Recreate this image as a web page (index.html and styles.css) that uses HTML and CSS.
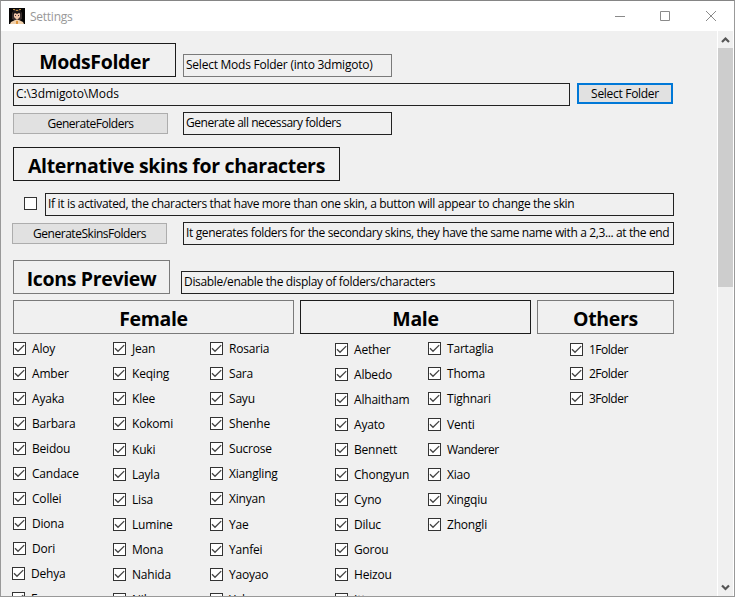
FILE: index.html
```
<!DOCTYPE html>
<html lang="en">
<head>
<meta charset="utf-8">
<title>Settings</title>
<link rel="stylesheet" href="styles.css">
</head>
<body>
<svg width="0" height="0" class="defs"><defs>
<symbol id="c" viewBox="0 0 13 13"><rect x=".5" y=".5" width="12" height="12" fill="#fff" stroke="#333"/><path d="M2 6.300 5 9.300 11.200 3.100" fill="none" stroke="#444" stroke-width="1.300"/></symbol>
</defs></svg>
<div class="window">
<header class="titlebar">
<svg class="avatar" width="16" height="16" viewBox="0 0 16 16"><rect width="16" height="16" fill="#060505"/><path d="M3 5 5 2 8 1l3 1 2 3v6l-2 1H5l-2-1z" fill="#3a302f"/><path d="M5 5h6v4l-3 3-3-3z" fill="#edc3a6"/><path d="M4 1h2v1H4zM10 1h2v1h-2zM7 2h2v1H7z" fill="#b98a3c"/><path d="M4 3h8v3l-2-1-2 1-2-1-2 2z" fill="#1c1717"/><path d="M6 7h1v1H6zM9 7h1v1H9z" fill="#42303a"/><path d="M1 16l1-2 4-2h4l4 2 1 2z" fill="#f0d0ab"/><path d="M7 13h2v3H7z" fill="#e0963d"/></svg>
<span class="caption">Settings</span>
<svg class="controls" width="104" height="12" viewBox="0 0 104 12" fill="none" stroke="#8a8a8a"><path d="M0 6.500h10M45.500 1.500h9v9h-9zM91 1l10 10M101 1 91 11"/></svg>
</header>
<div class="client">
<main class="content">
<div class="row r1"><h1 class="title mods">ModsFolder</h1><div class="box soft short">Select Mods Folder (into 3dmigoto)</div></div>
<div class="row r2"><div class="box path">C:\3dmigoto\Mods</div><button class="btn focus">Select Folder</button></div>
<div class="row r3"><button class="btn">GenerateFolders</button><div class="box short all">Generate all necessary folders</div></div>
<div class="row r4"><h1 class="title alt">Alternative skins for characters</h1></div>
<div class="row r5"><span class="empty"></span><div class="box grow">If it is activated, the characters that have more than one skin, a button will appear to change the skin</div></div>
<div class="row r6"><button class="btn">GenerateSkinsFolders</button><div class="box grow long">It generates folders for the secondary skins, they have the same name with a 2,3... at the end</div></div>
<div class="row r7"><h1 class="title soft icons">Icons Preview</h1><div class="box grow">Disable/enable the display of folders/characters</div></div>
<div class="groups">
<section class="female"><h1 class="title soft">Female</h1><div class="cols">
<ul><li><svg><use href="#c"/></svg>Aloy</li><li><svg><use href="#c"/></svg>Amber</li><li><svg><use href="#c"/></svg>Ayaka</li><li><svg><use href="#c"/></svg>Barbara</li><li><svg><use href="#c"/></svg>Beidou</li><li><svg><use href="#c"/></svg>Candace</li><li><svg><use href="#c"/></svg>Collei</li><li><svg><use href="#c"/></svg>Diona</li><li><svg><use href="#c"/></svg>Dori</li><li class="out"><svg><use href="#c"/></svg>Dehya</li><li class="out"><svg><use href="#c"/></svg>Faruzan</li></ul>
<ul><li><svg><use href="#c"/></svg>Jean</li><li><svg><use href="#c"/></svg>Keqing</li><li><svg><use href="#c"/></svg>Klee</li><li><svg><use href="#c"/></svg>Kokomi</li><li class="down"><svg><use href="#c"/></svg>Kuki</li><li><svg><use href="#c"/></svg>Layla</li><li><svg><use href="#c"/></svg>Lisa</li><li><svg><use href="#c"/></svg>Lumine</li><li><svg><use href="#c"/></svg>Mona</li><li><svg><use href="#c"/></svg>Nahida</li><li><svg><use href="#c"/></svg>Nilou</li></ul>
<ul><li><svg><use href="#c"/></svg>Rosaria</li><li><svg><use href="#c"/></svg>Sara</li><li><svg><use href="#c"/></svg>Sayu</li><li><svg><use href="#c"/></svg>Shenhe</li><li><svg><use href="#c"/></svg>Sucrose</li><li><svg><use href="#c"/></svg>Xiangling</li><li><svg><use href="#c"/></svg>Xinyan</li><li class="down"><svg><use href="#c"/></svg>Yae</li><li><svg><use href="#c"/></svg>Yanfei</li><li><svg><use href="#c"/></svg>Yaoyao</li><li><svg><use href="#c"/></svg>Yelan</li></ul>
</div></section>
<section class="male"><h1 class="title">Male</h1><div class="cols">
<ul><li class="down"><svg><use href="#c"/></svg>Aether</li><li><svg><use href="#c"/></svg>Albedo</li><li><svg><use href="#c"/></svg>Alhaitham</li><li><svg><use href="#c"/></svg>Ayato</li><li><svg><use href="#c"/></svg>Bennett</li><li><svg><use href="#c"/></svg>Chongyun</li><li><svg><use href="#c"/></svg>Cyno</li><li><svg><use href="#c"/></svg>Diluc</li><li><svg><use href="#c"/></svg>Gorou</li><li><svg><use href="#c"/></svg>Heizou</li><li><svg><use href="#c"/></svg>Itto</li></ul>
<ul><li><svg><use href="#c"/></svg>Tartaglia</li><li><svg><use href="#c"/></svg>Thoma</li><li><svg><use href="#c"/></svg>Tighnari</li><li class="down"><svg><use href="#c"/></svg>Venti</li><li class="tight"><svg><use href="#c"/></svg>Wanderer</li><li><svg><use href="#c"/></svg>Xiao</li><li><svg><use href="#c"/></svg>Xingqiu</li><li><svg><use href="#c"/></svg>Zhongli</li></ul>
</div></section>
<section class="others"><h1 class="title soft">Others</h1><div class="cols">
<ul><li class="down tight"><svg><use href="#c"/></svg>1Folder</li><li class="up tight"><svg><use href="#c"/></svg>2Folder</li><li class="tight"><svg><use href="#c"/></svg>3Folder</li></ul>
</div></section>
</div>
</main>
<aside class="scrollbar">
<svg width="15" height="17" viewBox="0 0 15 17"><path d="M4 11 7.500 7.500 11 11" fill="none" stroke="#555" stroke-width="2.200"/></svg>
<div class="thumb"></div>
<svg width="15" height="17" viewBox="0 0 15 17"><path d="M4 6.500 7.500 10 11 6.500" fill="none" stroke="#555" stroke-width="2.200"/></svg>
</aside>
</div>
</div>
</body>
</html>
```
FILE: styles.css
```
* { box-sizing: border-box; }
body { margin: 0; font: 12px "Open Sans", "Noto Sans", sans-serif; color: #000; overflow: hidden; }
.defs { position: absolute; }
.window { width: 735px; height: 597px; border: 1px solid #999; border-top-color: #858585; display: flex; flex-direction: column; background: #f0f0f0; overflow: hidden; }
.titlebar { height: 30px; flex: none; background: #fff; display: flex; align-items: center; padding: 0 15px 0 8px; }
.caption { margin-left: 5px; color: #999; flex: 1; letter-spacing: -.25px; }
.client { flex: 1; min-height: 0; display: flex; }
.content { flex: 1; padding: 12px 0 0 12px; overflow: hidden; }
.row { display: flex; }
.title { margin: 0; height: 34px; border: 1px solid #1c1c1c; font-size: 19.5px; font-weight: 700; line-height: 35px; letter-spacing: -.33px; text-align: center; white-space: nowrap; }
.title.soft, .box.soft { border-color: #7a7a7a; }
.box { height: 23px; border: 1px solid #222; padding-left: 2px; line-height: 20px; white-space: nowrap; letter-spacing: -.33px; }
.box.soft { letter-spacing: -.24px; }
.box.path { letter-spacing: -.08px; }
.box.all { letter-spacing: -.46px; }
.box.long { letter-spacing: -.37px; }
.short { width: 209px; }
.btn { width: 155px; height: 21px; flex: none; padding: 0; border: 1px solid #adadad; background: #e1e1e1; font: inherit; line-height: 19px; letter-spacing: -.47px; color: #000; }
.btn.focus { width: 96px; border: 2px solid #0078d7; line-height: 17px; letter-spacing: -.3px; }
.r1 { gap: 7px; align-items: flex-end; }
.mods { width: 163px; }
.r2 { margin-top: 6px; gap: 7px; }
.path { width: 557px; }
.r3 { margin-top: 6px; gap: 15px; align-items: center; }
.r4 { margin-top: 12px; }
.alt { width: 327px; }
.r5, .r6, .r7 { width: 661px; }
.grow { flex: 1; min-width: 0; }
.r5 { margin-top: 12px; padding-left: 11px; gap: 8px; }
.empty { width: 13px; height: 13px; margin-top: 4px; border: 1px solid #333; background: #fff; }
.r6 { width: 662px; margin: 6px 0 0 -1px; gap: 16px; align-items: center; }
.r7 { margin-top: 15px; gap: 11px; align-items: flex-end; }
.icons { width: 157px; }
.groups { display: flex; gap: 6px; margin-top: 6px; }
.female { width: 281px; }
.male { width: 231px; }
.others { width: 137px; }
.cols { display: grid; padding-top: 8px; }
.female .cols { grid-template-columns: 100px 97px 84px; }
.male .cols { grid-template-columns: 93px 103px; padding-left: 35px; }
.others .cols { padding-left: 33px; }
ul { list-style: none; margin: 0; padding: 0; display: flex; flex-direction: column; }
li { height: 13px; margin-bottom: 12px; display: flex; align-items: flex-start; gap: 6px; line-height: 13px; white-space: nowrap; letter-spacing: -.2px; }
li svg { width: 13px; height: 13px; flex: none; }
.down { margin-top: 1px; }
.up { margin-top: -1px; }
.out { margin-left: -1px; }
.tight { letter-spacing: -.5px; }
.scrollbar { width: 17px; border-left: 1px solid #fff; border-right: 1px solid #fff; display: flex; flex-direction: column; }
.scrollbar svg { flex: none; }
.thumb { height: 239px; background: #cdcdcd; margin-bottom: auto; }
```
